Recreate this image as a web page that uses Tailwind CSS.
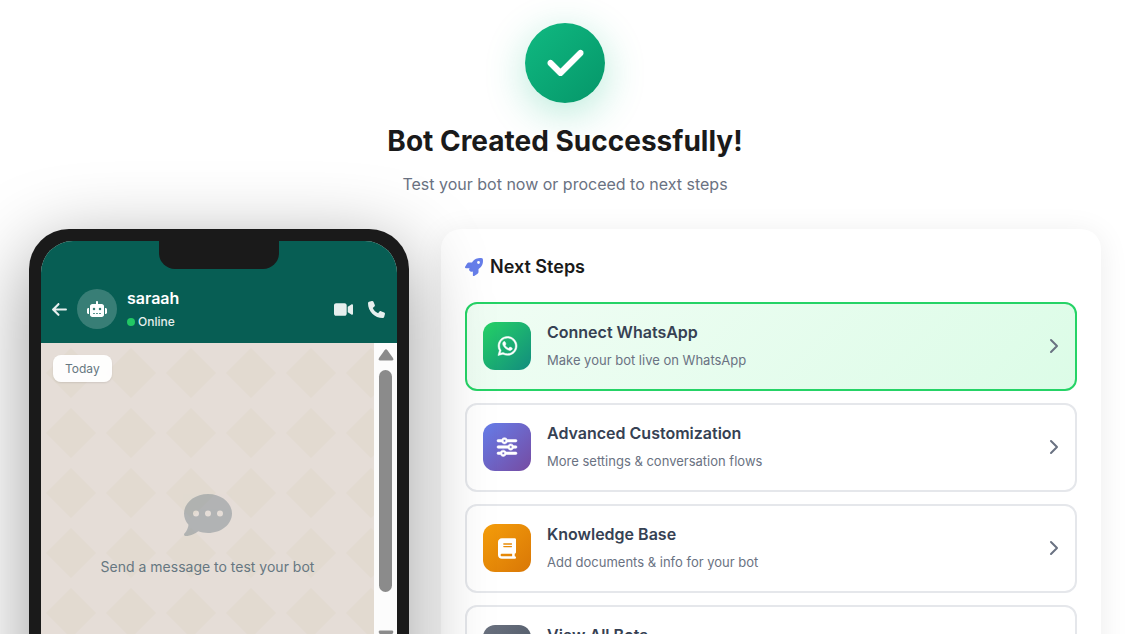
<!DOCTYPE html>
<html lang="en">
<head>
    <meta charset="UTF-8">
    <meta name="viewport" content="width=device-width, initial-scale=1.0">
    <title>Bot Created Successfully</title>
    <script src="https://cdn.jsdelivr.net/npm/@tailwindcss/browser@4"></script>
</head>

<body class="h-screen overflow-hidden bg-white font-['Inter',sans-serif] text-[#1a1a1a]">
    <main class="pl-[29px] pr-[27px] pt-[23px]">
        <!-- Success header -->
        <header class="flex flex-col items-center text-center">
            <div class="flex h-20 w-20 items-center justify-center rounded-full bg-[linear-gradient(135deg,#10b981,#059669)] shadow-[0_10px_40px_rgba(16,185,129,0.3)]">
                <svg class="h-10 w-[35px] overflow-visible text-white" viewBox="0 0 448 512" fill="currentColor" stroke="currentColor" stroke-width="14" aria-hidden="true">
                    <path d="M438.600 105.400c12.500 12.500 12.500 32.800 0 45.300l-256 256c-12.500 12.500-32.800 12.500-45.300 0l-128-128c-12.500-12.500-12.500-32.800 0-45.300s32.800-12.500 45.300 0L160 338.700 393.400 105.400c12.500-12.500 32.800-12.500 45.300 0z"/>
                </svg>
            </div>
            <h1 class="mt-5 text-[28px] leading-9 font-bold">Bot Created Successfully!</h1>
            <p class="mt-3 text-base leading-[26px] text-gray-500">Test your bot now or proceed to next steps</p>
        </header>

        <div class="mt-8 grid grid-cols-[380px_1fr] items-start gap-8">
            <!-- Phone preview -->
            <section class="relative z-10 rounded-[40px] bg-[#1a1a1a] p-3 shadow-[0_20px_80px_rgba(0,0,0,0.4)]">
                <div class="relative flex h-[640px] flex-col overflow-hidden rounded-[32px] bg-[#e5ddd5]">
                    <div class="absolute top-0 left-1/2 h-7 w-[120px] -translate-x-1/2 rounded-b-2xl bg-[#1a1a1a]"></div>

                    <div class="flex items-center gap-[10px] bg-[#075e54] px-[10px] pt-[47px] pb-[13px] text-white">
                        <button class="flex h-5 w-4 items-center justify-end opacity-90" aria-label="Back">
                            <svg class="h-[17px] w-[15px]" viewBox="0 0 448 512" fill="currentColor" aria-hidden="true">
                                <path d="M9.4 233.400c-12.500 12.500-12.500 32.800 0 45.300l160 160c12.500 12.500 32.800 12.500 45.300 0s12.500-32.800 0-45.300L109.200 288 416 288c17.700 0 32-14.300 32-32s-14.300-32-32-32l-306.700 0L214.600 118.600c12.500-12.500 12.500-32.800 0-45.300s-32.800-12.500-45.300 0l-160 160z"/>
                            </svg>
                        </button>
                        <div class="flex h-10 w-10 items-center justify-center rounded-full bg-white/20">
                            <svg class="h-4 w-5 overflow-visible" viewBox="0 0 640 512" fill="currentColor" aria-hidden="true">
                                <path d="M320 0c17.700 0 32 14.300 32 32l0 64 120 0c39.800 0 72 32.200 72 72l0 272c0 39.800-32.200 72-72 72l-304 0c-39.800 0-72-32.200-72-72l0-272c0-39.800 32.200-72 72-72l120 0 0-64c0-17.700 14.300-32 32-32zM208 384c-8.800 0-16 7.200-16 16s7.200 16 16 16l32 0c8.800 0 16-7.200 16-16s-7.200-16-16-16l-32 0zm96 0c-8.800 0-16 7.200-16 16s7.200 16 16 16l32 0c8.800 0 16-7.200 16-16s-7.200-16-16-16l-32 0zm96 0c-8.800 0-16 7.200-16 16s7.200 16 16 16l32 0c8.800 0 16-7.200 16-16s-7.200-16-16-16l-32 0zM264 256a40 40 0 1 0-80 0 40 40 0 1 0 80 0zm152 40a40 40 0 1 0 0-80 40 40 0 1 0 0 80zM48 224l16 0 0 192-16 0c-26.500 0-48-21.500-48-48l0-96c0-26.500 21.500-48 48-48zm544 0c26.500 0 48 21.500 48 48l0 96c0 26.500-21.500 48-48 48l-16 0 0-192 16 0z"/>
                            </svg>
                        </div>
                        <div class="flex-1">
                            <h2 class="text-base leading-5 font-semibold">saraah</h2>
                            <p class="mt-[6px] flex items-center gap-[3px] text-xs leading-4 font-medium opacity-90">
                                <span class="h-2 w-2 rounded-full bg-[#25d366]"></span>Online
                            </p>
                        </div>
                        <div class="flex items-center gap-[15px] pr-[2px] opacity-90">
                            <button aria-label="Video call">
                                <svg class="h-[17px] w-[19px]" viewBox="0 0 576 512" fill="currentColor" aria-hidden="true">
                                    <path d="M0 128C0 92.700 28.700 64 64 64l256 0c35.300 0 64 28.700 64 64l0 256c0 35.300-28.700 64-64 64L64 448c-35.300 0-64-28.700-64-64L0 128zM559.100 99.800c10.400 5.600 16.900 16.400 16.900 28.200l0 256c0 11.800-6.500 22.600-16.900 28.200s-23 5-32.900-1.600l-96-64L416 337.100l0-17.100 0-128 0-17.100 14.200-9.500 96-64c9.800-6.500 22.400-7.200 32.900-1.600z"/>
                                </svg>
                            </button>
                            <button aria-label="Voice call">
                                <svg class="h-[17px] w-[17px]" viewBox="0 0 512 512" fill="currentColor" aria-hidden="true">
                                    <path d="M164.900 24.600c-7.700-18.600-28-28.500-47.400-23.200l-88 24C12.100 30.200 0 46 0 64C0 311.400 200.600 512 448 512c18 0 33.800-12.100 38.600-29.500l24-88c5.300-19.400-4.600-39.700-23.200-47.400l-96-40c-16.300-6.800-35.200-2.100-46.300 11.600L304.700 368C234.300 334.700 177.300 277.700 144 207.300L193.300 167c13.700-11.200 18.400-30 11.600-46.300l-40-96z"/>
                                </svg>
                            </button>
                        </div>
                    </div>

                    <div class="flex min-h-0 flex-1">
                        <div class="relative flex flex-1 flex-col p-3">
                            <svg class="absolute inset-0 h-full w-full" aria-hidden="true">
                                <defs>
                                    <pattern id="chat-pattern" width="60" height="60" patternUnits="userSpaceOnUse">
                                        <path d="M30 5L55 30L30 55L5 30z" fill="#e2dad0"/>
                                    </pattern>
                                </defs>
                                <rect width="100%" height="100%" fill="#e5ddd7"/>
                                <rect width="100%" height="100%" fill="url(#chat-pattern)"/>
                            </svg>
                            <span class="relative self-start rounded-lg bg-white/95 px-3 py-[5px] text-xs leading-[17px] text-[#667781] shadow-[0_1px_2px_rgba(0,0,0,0.1)]">Today</span>
                            <div class="relative mt-[109px] flex flex-col items-center text-[#667781]">
                                <svg class="h-12 w-12 opacity-40" viewBox="0 0 512 512" fill="currentColor" aria-hidden="true">
                                    <path d="M256 448c141.400 0 256-93.100 256-208S397.400 32 256 32S0 125.100 0 240c0 45.100 17.700 86.800 47.700 120.900c-1.900 24.500-11.400 46.300-21.400 62.900c-5.500 9.200-11.100 16.600-15.200 21.600c-2.100 2.500-3.700 4.400-4.900 5.700c-.6 .6-1 1.100-1.300 1.400l-.3 .3c-4.600 4.600-5.900 11.400-3.400 17.400c2.500 6 8.300 9.900 14.800 9.900c28.700 0 57.600-8.900 81.600-19.300c22.900-10 42.400-21.900 54.300-30.600c31.800 11.500 67 17.900 104.100 17.900zM128 208a32 32 0 1 1 0 64 32 32 0 1 1 0-64zm128 0a32 32 0 1 1 0 64 32 32 0 1 1 0-64zm96 32a32 32 0 1 1 64 0 32 32 0 1 1 -64 0z"/>
                                </svg>
                                <p class="mt-4 text-sm leading-6">Send a message to test your bot</p>
                            </div>
                        </div>

                        <!-- Scroll track -->
                        <div class="flex w-[23px] flex-col items-center bg-[#fcfcfc] pt-[6px] text-[#8b8b8b]" aria-hidden="true">
                            <svg class="h-3 w-4" viewBox="0 0 16 12" fill="currentColor">
                                <path d="M6.600 1.200Q8-.6 9.400 1.200L15 9Q16 11.500 13.800 11.500H2.200Q0 11.500 1 9z"/>
                            </svg>
                            <div class="mt-[9px] h-[222px] w-[13px] rounded-full bg-[#8b8b8b]"></div>
                            <svg class="mt-[38px] h-3 w-4" viewBox="0 0 16 12" fill="currentColor">
                                <path d="M6.600 10.800Q8 12.600 9.400 10.800L15 3Q16 .5 13.800 .5H2.200Q0 .5 1 3z"/>
                            </svg>
                        </div>
                    </div>
                </div>
            </section>

            <!-- Next steps -->
            <section class="rounded-[20px] bg-white p-6 shadow-[0_4px_30px_rgba(0,0,0,0.08)]">
                <h2 class="flex items-center gap-[7px] text-lg leading-7 font-semibold">
                    <svg class="h-[18px] w-[18px] text-[#667eea]" viewBox="0 0 512 512" fill="currentColor" aria-hidden="true">
                        <path d="M156.600 384.900L125.700 354c-8.500-8.500-11.500-20.800-7.700-32.200c3-8.900 7-20.500 11.800-33.800L24 288c-8.600 0-16.600-4.600-20.900-12.100s-4.200-16.700 .2-24.100l52.500-88.500c13-21.900 36.500-35.300 61.900-35.300l82.300 0c2.400-4 4.800-7.700 7.200-11.300C289.100-4.100 411.100-8.100 483.900 5.300c11.600 2.100 20.600 11.200 22.800 22.800c13.400 72.900 9.300 194.800-111.400 276.700c-3.500 2.400-7.300 4.800-11.300 7.200l0 82.300c0 25.400-13.400 49-35.300 61.900l-88.500 52.500c-7.400 4.400-16.600 4.500-24.100 .2s-12.100-12.200-12.100-20.900l0-107.200c-14.100 4.900-26.400 8.900-35.700 11.900c-11.200 3.600-23.400 .5-31.800-7.800zM384 168a40 40 0 1 0 0-80 40 40 0 1 0 0 80z"/>
                    </svg>
                    Next Steps
                </h2>

                <div class="mt-[21px] flex flex-col gap-3">
                    <a href="#" class="flex items-center gap-4 rounded-xl border-2 border-[#25d366] bg-[linear-gradient(135deg,#f0fdf4,#dcfce7)] px-4 pt-[18px] pb-[19px]">
                        <span class="flex h-12 w-12 items-center justify-center rounded-xl bg-[linear-gradient(135deg,#25d366,#128c7e)] text-white">
                            <svg class="h-[22px] w-[19px] overflow-visible" viewBox="0 0 448 512" fill="currentColor" stroke="currentColor" stroke-width="12" aria-hidden="true">
                                <path d="M380.900 97.100C339 55.100 283.200 32 223.900 32c-122.400 0-222 99.600-222 222 0 39.100 10.200 77.300 29.600 111L0 480l117.700-30.900c32.400 17.700 68.900 27 106.100 27h.1c122.300 0 224.100-99.600 224.100-222 0-59.300-25.200-115-67.100-157zm-157 341.600c-33.200 0-65.700-8.900-94-25.700l-6.700-4-69.800 18.300L72 359.200l-4.400-7c-18.500-29.400-28.200-63.300-28.200-98.200 0-101.700 82.800-184.500 184.600-184.500 49.300 0 95.600 19.200 130.400 54.100 34.800 34.900 56.200 81.200 56.100 130.500 0 101.800-84.900 184.600-186.600 184.600zm101.200-138.200c-5.500-2.800-32.800-16.200-37.900-18-5.100-1.900-8.800-2.800-12.500 2.800-3.700 5.600-14.300 18-17.600 21.800-3.200 3.700-6.500 4.200-12 1.400-32.600-16.300-54-29.100-75.500-66-5.700-9.800 5.700-9.100 16.300-30.300 1.800-3.700.9-6.900-.5-9.700-1.400-2.800-12.500-30.100-17.100-41.200-4.500-10.800-9.100-9.300-12.500-9.500-3.200-.2-6.900-.2-10.600-.2-3.700 0-9.700 1.400-14.800 6.900-5.100 5.600-19.400 19-19.400 46.300 0 27.300 19.900 53.700 22.600 57.400 2.800 3.700 39.100 59.700 94.800 83.800 35.200 15.200 49 16.500 66.600 13.900 10.700-1.600 32.800-13.400 37.400-26.400 4.600-13 4.600-24.100 3.200-26.400-1.300-2.500-5-3.900-10.500-6.600z"/>
                            </svg>
                        </span>
                        <span class="flex flex-1 flex-col gap-2">
                            <span class="text-base leading-5 font-semibold text-gray-700">Connect WhatsApp</span>
                            <span class="text-[13px] leading-5 text-gray-500">Make your bot live on WhatsApp</span>
                        </span>
                        <svg class="h-4 w-[10px] text-gray-500" viewBox="0 0 10 16" fill="none" stroke="currentColor" stroke-width="2" stroke-linecap="round" stroke-linejoin="round" aria-hidden="true"><path d="M2 2l6 6-6 6"/></svg>
                    </a>

                    <a href="#" class="flex items-center gap-4 rounded-xl border-2 border-gray-200 bg-white px-4 pt-[18px] pb-[19px]">
                        <span class="flex h-12 w-12 items-center justify-center rounded-xl bg-[linear-gradient(135deg,#667eea,#764ba2)] text-white">
                            <svg class="h-5 w-5 overflow-visible" viewBox="0 0 512 512" fill="currentColor" stroke="currentColor" stroke-width="14" aria-hidden="true">
                                <path d="M0 416c0 17.700 14.300 32 32 32l54.700 0c12.300 28.300 40.500 48 73.300 48s61-19.700 73.300-48L480 448c17.700 0 32-14.300 32-32s-14.300-32-32-32l-246.700 0c-12.300-28.300-40.500-48-73.300-48s-61 19.700-73.300 48L32 384c-17.700 0-32 14.300-32 32zm128 0a32 32 0 1 1 64 0 32 32 0 1 1 -64 0zM320 256a32 32 0 1 1 64 0 32 32 0 1 1 -64 0zm32-80c-32.800 0-61 19.700-73.300 48L32 224c-17.700 0-32 14.300-32 32s14.300 32 32 32l246.700 0c12.300 28.300 40.500 48 73.300 48s61-19.700 73.300-48l54.700 0c17.700 0 32-14.300 32-32s-14.300-32-32-32l-54.700 0c-12.300-28.300-40.500-48-73.300-48zM192 128a32 32 0 1 1 0-64 32 32 0 1 1 0 64zm73.300-64C253 35.700 224.800 16 192 16s-61 19.700-73.300 48L32 64C14.300 64 0 78.300 0 96s14.300 32 32 32l86.700 0c12.300 28.300 40.500 48 73.300 48s61-19.700 73.300-48L480 128c17.700 0 32-14.300 32-32s-14.300-32-32-32L265.300 64z"/>
                            </svg>
                        </span>
                        <span class="flex flex-1 flex-col gap-2">
                            <span class="text-base leading-5 font-semibold text-gray-700">Advanced Customization</span>
                            <span class="text-[13px] leading-5 text-gray-500">More settings &amp; conversation flows</span>
                        </span>
                        <svg class="h-4 w-[10px] text-gray-500" viewBox="0 0 10 16" fill="none" stroke="currentColor" stroke-width="2" stroke-linecap="round" stroke-linejoin="round" aria-hidden="true"><path d="M2 2l6 6-6 6"/></svg>
                    </a>

                    <a href="#" class="flex items-center gap-4 rounded-xl border-2 border-gray-200 bg-white px-4 pt-[18px] pb-[19px]">
                        <span class="flex h-12 w-12 items-center justify-center rounded-xl bg-[linear-gradient(135deg,#f59e0b,#d97706)] text-white">
                            <svg class="h-[21px] w-[18px]" viewBox="0 0 448 512" fill="currentColor" aria-hidden="true">
                                <path d="M96 0C43 0 0 43 0 96L0 416c0 53 43 96 96 96l288 0 32 0c17.700 0 32-14.300 32-32s-14.300-32-32-32l0-64c17.700 0 32-14.300 32-32l0-320c0-17.700-14.300-32-32-32L384 0 96 0zm0 384l256 0 0 64L96 448c-17.700 0-32-14.300-32-32s14.300-32 32-32zm32-240c0-8.800 7.200-16 16-16l192 0c8.800 0 16 7.200 16 16s-7.200 16-16 16l-192 0c-8.800 0-16-7.200-16-16zm16 48l192 0c8.800 0 16 7.200 16 16s-7.200 16-16 16l-192 0c-8.800 0-16-7.200-16-16s7.200-16 16-16z"/>
                            </svg>
                        </span>
                        <span class="flex flex-1 flex-col gap-2">
                            <span class="text-base leading-5 font-semibold text-gray-700">Knowledge Base</span>
                            <span class="text-[13px] leading-5 text-gray-500">Add documents &amp; info for your bot</span>
                        </span>
                        <svg class="h-4 w-[10px] text-gray-500" viewBox="0 0 10 16" fill="none" stroke="currentColor" stroke-width="2" stroke-linecap="round" stroke-linejoin="round" aria-hidden="true"><path d="M2 2l6 6-6 6"/></svg>
                    </a>

                    <a href="#" class="flex items-center gap-4 rounded-xl border-2 border-gray-200 bg-white px-4 pt-[18px] pb-[19px]">
                        <span class="flex h-12 w-12 items-center justify-center rounded-xl bg-[linear-gradient(135deg,#6b7280,#4b5563)] text-white">
                            <svg class="h-5 w-5" viewBox="0 0 20 20" fill="none" stroke="currentColor" stroke-width="2" stroke-linecap="round" aria-hidden="true"><path d="M2 4h1M7 4h11M2 10h1M7 10h11M2 16h1M7 16h11"/></svg>
                        </span>
                        <span class="flex flex-1 flex-col gap-2">
                            <span class="text-base leading-5 font-semibold text-gray-700">View All Bots</span>
                            <span class="text-[13px] leading-5 text-gray-500">Manage your bots</span>
                        </span>
                        <svg class="h-4 w-[10px] text-gray-500" viewBox="0 0 10 16" fill="none" stroke="currentColor" stroke-width="2" stroke-linecap="round" stroke-linejoin="round" aria-hidden="true"><path d="M2 2l6 6-6 6"/></svg>
                    </a>
                </div>
            </section>
        </div>
    </main>
</body>
</html>
